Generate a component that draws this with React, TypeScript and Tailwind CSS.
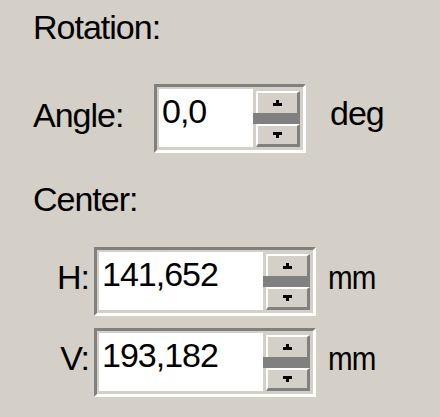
import React from "react";

function UpArrow() {
  return (
    <div className="flex flex-col items-center">
      <div className="w-[3px] h-[3px] bg-black" />
      <div className="w-[9px] h-[3px] bg-black" />
    </div>
  );
}

function DownArrow() {
  return (
    <div className="flex flex-col items-center">
      <div className="w-[9px] h-[3px] bg-black" />
      <div className="w-[3px] h-[3px] bg-black" />
    </div>
  );
}

function SpinBox({ value, fieldWidth }: { value: string; fieldWidth: number }) {
  return (
    <div className="border-t-[3px] border-l-[3px] border-t-[#808080] border-l-[#808080] border-b-[3px] border-r-[3px] border-b-white border-r-white">
      <div className="flex border-t-[2px] border-l-[2px] border-b-[3px] border-r-[3px] border-[#d4d0c8] bg-[#d4d0c8]">
        <div
          className="h-[58px] bg-white pl-[3px] pt-[5px] text-[34px] leading-[34px] tracking-[-1px] text-black"
          style={{ width: fieldWidth }}
        >
          {value}
        </div>
        <div className="flex h-[58px] w-[47px] flex-col pt-[2px]">
          <div className="ml-[3px] flex h-[22px] w-[44px] items-center justify-center border-t-[2px] border-l-[2px] border-r-[3px] border-t-white border-l-white border-r-[#808080] bg-[#d4d0c8]">
            <UpArrow />
          </div>
          <div className="h-[11px] w-[47px] bg-[#808080]" />
          <div className="ml-[3px] flex h-[23px] w-[44px] items-center justify-center border-t-[2px] border-l-[2px] border-r-[3px] border-b-[3px] border-t-white border-l-white border-r-[#808080] border-b-[#808080] bg-[#d4d0c8]">
            <DownArrow />
          </div>
        </div>
      </div>
    </div>
  );
}

export default function App() {
  return (
    <div
      className="flex h-[417px] w-[440px] flex-col bg-[#d4d0c8] pl-[33px] pt-[10px] text-[34px] leading-[34px] tracking-[-1px] text-black"
      style={{ fontFamily: '"Liberation Sans", Arial, sans-serif' }}
    >
      <div className="h-[34px]">Rotation:</div>

      <div className="mt-[40px] flex items-start">
        <div className="mt-[14px] w-[121px]">Angle:</div>
        <SpinBox value="0,0" fieldWidth={94} />
        <div className="ml-[24px] mt-[12px]">deg</div>
      </div>

      <div className="mt-[29px] h-[34px]">Center:</div>

      <div className="mt-[31px] flex items-start">
        <div className="mt-[13px] w-[61px] pr-[5px] text-right">H:</div>
        <SpinBox value="141,652" fieldWidth={164} />
        <div className="ml-[12px] mt-[13px] origin-left scale-x-[0.87]">mm</div>
      </div>

      <div className="mt-[12px] flex items-start">
        <div className="mt-[13px] w-[61px] pr-[5px] text-right">V:</div>
        <SpinBox value="193,182" fieldWidth={164} />
        <div className="ml-[12px] mt-[13px] origin-left scale-x-[0.87]">mm</div>
      </div>
    </div>
  );
}
